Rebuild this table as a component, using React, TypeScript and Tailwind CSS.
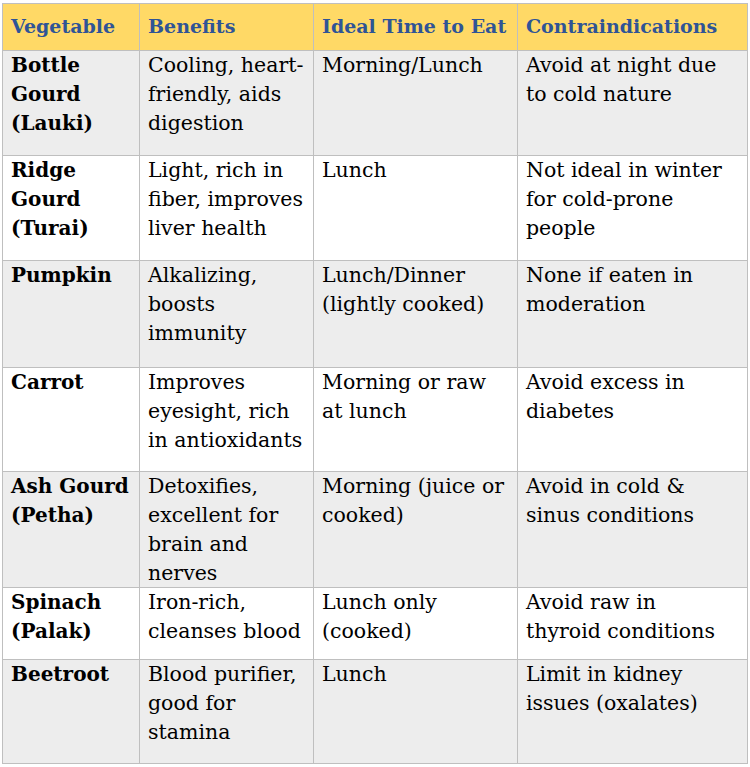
const headers = ['Vegetable', 'Benefits', 'Ideal Time to Eat', 'Contraindications'];

type Row = {
  height: string;
  shaded: boolean;
  cells: string[][];
};

const rows: Row[] = [
  {
    height: 'h-[105px]',
    shaded: true,
    cells: [
      ['Bottle', 'Gourd', '(Lauki)'],
      ['Cooling, heart-', 'friendly, aids', 'digestion'],
      ['Morning/Lunch'],
      ['Avoid at night due', 'to cold nature'],
    ],
  },
  {
    height: 'h-[105px]',
    shaded: false,
    cells: [
      ['Ridge', 'Gourd', '(Turai)'],
      ['Light, rich in', 'fiber, improves', 'liver health'],
      ['Lunch'],
      ['Not ideal in winter', 'for cold-prone', 'people'],
    ],
  },
  {
    height: 'h-[107px]',
    shaded: true,
    cells: [
      ['Pumpkin'],
      ['Alkalizing,', 'boosts', 'immunity'],
      ['Lunch/Dinner', '(lightly cooked)'],
      ['None if eaten in', 'moderation'],
    ],
  },
  {
    height: 'h-[104px]',
    shaded: false,
    cells: [
      ['Carrot'],
      ['Improves', 'eyesight, rich', 'in antioxidants'],
      ['Morning or raw', 'at lunch'],
      ['Avoid excess in', 'diabetes'],
    ],
  },
  {
    height: 'h-[116px]',
    shaded: true,
    cells: [
      ['Ash Gourd', '(Petha)'],
      ['Detoxifies,', 'excellent for', 'brain and', 'nerves'],
      ['Morning (juice or', 'cooked)'],
      ['Avoid in cold &', 'sinus conditions'],
    ],
  },
  {
    height: 'h-[72px]',
    shaded: false,
    cells: [
      ['Spinach', '(Palak)'],
      ['Iron-rich,', 'cleanses blood'],
      ['Lunch only', '(cooked)'],
      ['Avoid raw in', 'thyroid conditions'],
    ],
  },
  {
    height: 'h-[104px]',
    shaded: true,
    cells: [
      ['Beetroot'],
      ['Blood purifier,', 'good for', 'stamina'],
      ['Lunch'],
      ['Limit in kidney', 'issues (oxalates)'],
    ],
  },
];

export default function App() {
  return (
    <div className="min-h-[767px] w-[750px] bg-white pl-[2px] pt-[3px] font-['DejaVu_Serif',serif] text-black">
      <div className="grid w-[746px] grid-cols-[137px_174px_204px_230px] border-l border-t border-[#bfbfbf]">
        {headers.map((h) => (
          <div
            key={h}
            className="h-[47px] overflow-hidden whitespace-nowrap border-b border-r border-[#bfbfbf] bg-[#ffd966] pl-2 pt-2 text-[19px] font-bold leading-[29px] text-[#2f5496]"
          >
            {h}
          </div>
        ))}
        {rows.map((row, ri) =>
          row.cells.map((lines, ci) => (
            <div
              key={`${ri}-${ci}`}
              className={`${row.height} overflow-hidden border-b border-r border-[#bfbfbf] pl-2 leading-[29px] ${
                row.shaded ? 'bg-[#ededed]' : 'bg-white'
              } ${ci === 0 ? 'text-[20px] font-bold' : 'text-[20.5px]'}`}
            >
              {lines.map((line) => (
                <span key={line} className="block whitespace-nowrap">
                  {line}
                </span>
              ))}
            </div>
          ))
        )}
      </div>
    </div>
  );
}
